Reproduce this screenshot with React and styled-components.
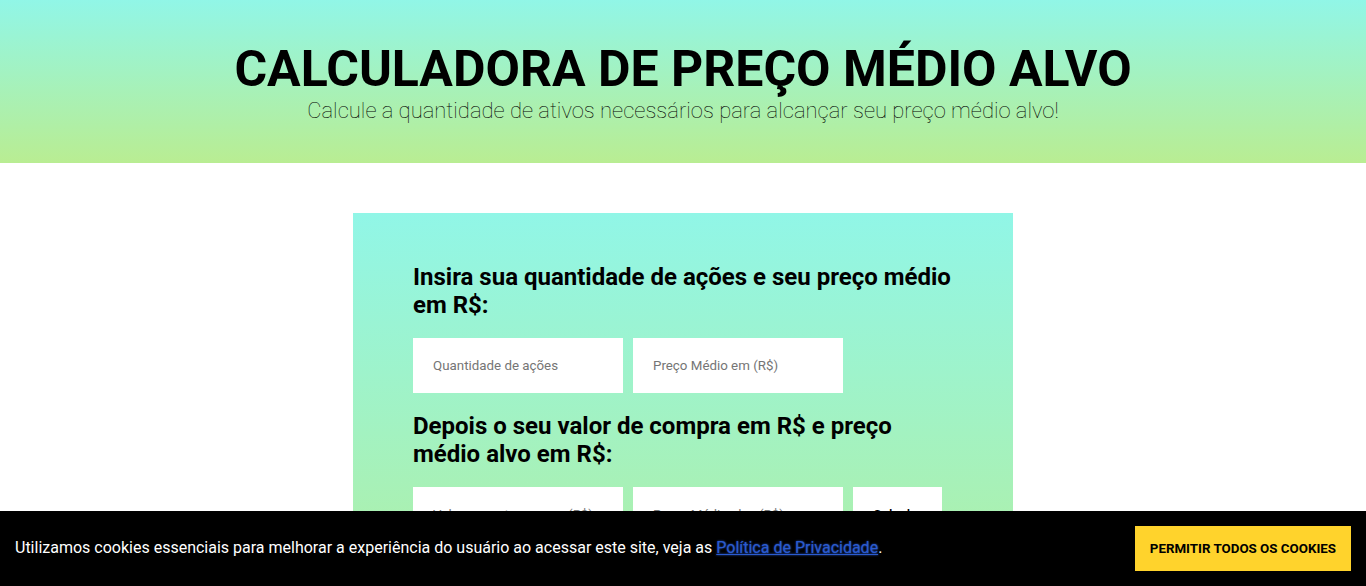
import React from "react";
import styled, { createGlobalStyle } from "styled-components";

const Global = createGlobalStyle`
  * { box-sizing: border-box; margin: 0; padding: 0; }
  body { background: #fff; color: #000; font-family: Roboto, "Liberation Sans", sans-serif; }
`;

const Header = styled.header`
  padding: 40px 20px;
  text-align: center;
  background: linear-gradient(#91f6e7, #b9ed92);
`;
const Title = styled.h1`
  font-size: 50px;
  line-height: 58px;
  font-weight: 700;
`;
const Subtitle = styled.p`
  font-size: 22px;
  line-height: 25px;
  font-weight: 100;
`;
const Form = styled.form`
  max-width: 660px;
  margin: 50px auto;
  padding: 50px 60px 140px;
  background: linear-gradient(#91f6e7, #b9ed92);
`;
const Heading = styled.h2`
  font-size: 24px;
  line-height: 28px;
  font-weight: 700;
  margin-bottom: 19px;
`;
const Row = styled.div`
  display: flex;
  flex-wrap: wrap;
  gap: 10px;
  margin-bottom: 19px;
`;
const Field = styled.input`
  width: 210px;
  height: 55px;
  padding: 20px;
  border: 0;
  background: #fff;
  font-family: inherit;
  &::placeholder { color: #757575; }
`;
const Submit = styled.button`
  height: 55px;
  padding: 20px;
  border: 0;
  background: #fff;
  color: #000;
  font-family: inherit;
  line-height: 15px;
  font-weight: 500;
`;
const CookieBar = styled.aside`
  position: fixed;
  left: 0;
  right: 0;
  bottom: 0;
  display: flex;
  align-items: center;
  justify-content: space-between;
  gap: 20px;
  padding: 15px;
  background: #000;
  color: #fff;
`;
const CookieText = styled.p`
  padding-bottom: 2px;
  font-size: 16px;
  line-height: 19px;
`;
const PolicyLink = styled.a`
  color: #2a5bd0;
  text-decoration: underline;
  text-shadow: 0 0 2px #2a5bd0;
`;
const AcceptButton = styled.button`
  flex-shrink: 0;
  height: 45px;
  padding: 15px;
  border: 0;
  background: #ffd32c;
  color: #000;
  font-family: inherit;
  line-height: 15px;
  font-weight: 700;
`;

export default function App() {
  return (
    <>
      <Global />
      <Header>
        <Title>CALCULADORA DE PREÇO MÉDIO ALVO</Title>
        <Subtitle>Calcule a quantidade de ativos necessários para alcançar seu preço médio alvo!</Subtitle>
      </Header>
      <main>
        <Form onSubmit={(e) => e.preventDefault()}>
          <Heading>Insira sua quantidade de ações e seu preço médio em R$:</Heading>
          <Row>
            <Field aria-label="Quantidade de ações" placeholder="Quantidade de ações" />
            <Field aria-label="Preço Médio em (R$)" placeholder="Preço Médio em (R$)" />
          </Row>
          <Heading>Depois o seu valor de compra em R$ e preço médio alvo em R$:</Heading>
          <Row>
            <Field aria-label="Valor por cota compra (R$)" placeholder="Valor por cota compra (R$)" />
            <Field aria-label="Preço Médio alvo (R$)" placeholder="Preço Médio alvo (R$)" />
            <Submit type="submit">Calcular</Submit>
          </Row>
        </Form>
      </main>
      <CookieBar>
        <CookieText>
          Utilizamos cookies essenciais para melhorar a experiência do usuário ao acessar este site, veja as{" "}
          <PolicyLink href="#privacidade">Política de Privacidade</PolicyLink>.
        </CookieText>
        <AcceptButton type="button">PERMITIR TODOS OS COOKIES</AcceptButton>
      </CookieBar>
    </>
  );
}
